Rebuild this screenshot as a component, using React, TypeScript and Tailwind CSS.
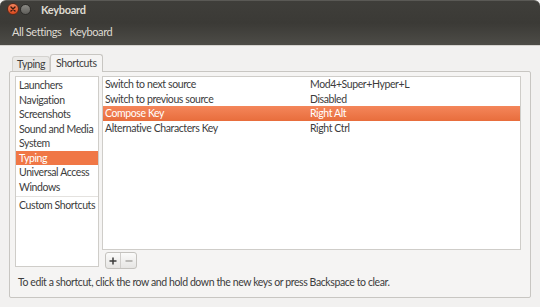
import React from 'react';

const font = { fontFamily: '"Lato", "Liberation Sans", sans-serif' };

const categories = [
  'Launchers',
  'Navigation',
  'Screenshots',
  'Sound and Media',
  'System',
  'Typing',
  'Universal Access',
  'Windows',
];

const shortcuts: { name: string; key: string }[] = [
  { name: 'Switch to next source', key: 'Mod4+Super+Hyper+L' },
  { name: 'Switch to previous source', key: 'Disabled' },
  { name: 'Compose Key', key: 'Right Alt' },
  { name: 'Alternative Characters Key', key: 'Right Ctrl' },
];

const WindowButtons = () => (
  <div className="flex items-center gap-[1px] pl-[7px]">
    <div className="w-[12px] h-[12px] rounded-full bg-gradient-to-b from-[#f4825a] to-[#d9491c] border border-[#5a2a1a] flex items-center justify-center">
      <svg width="6" height="6" viewBox="0 0 6 6">
        <path d="M1 1 L5 5 M5 1 L1 5" stroke="#3a1a10" strokeWidth="1.4" strokeLinecap="round" />
      </svg>
    </div>
    <div className="w-[11px] h-[11px] rounded-full bg-gradient-to-b from-[#8a8984] to-[#5f5e5a] border border-[#2e2d2a]" />
  </div>
);

export default function App() {
  return (
    <div className="w-[540px] h-[307px] bg-[#f2f1f0] flex flex-col overflow-hidden text-[#3c3c3c] text-[10.5px] tracking-[-0.4px] leading-none whitespace-nowrap" style={font}>
      {/* title + toolbar */}
      <div className="h-[45px] flex flex-col rounded-t-[6px] bg-gradient-to-b from-[#3f3e3a] via-[#3b3a36] to-[#4d4c47] border-t border-[#5a5955]">
        <div className="h-[16px] flex items-center">
          <WindowButtons />
          <span className="ml-[10px] font-bold text-[11px] tracking-[-0.3px] text-[#dfdbd2]">Keyboard</span>
        </div>
        <div className="flex-1 flex items-center pl-[12px] gap-[8px] text-[11px] text-[#dfdbd2]">
          <span>All Settings</span>
          <span>Keyboard</span>
        </div>
      </div>

      {/* content */}
      <div className="flex-1 flex flex-col px-[9px] pt-[7px] pb-[9px] border-t border-[#d6d4d0]">
        {/* tabs */}
        <div className="flex items-end h-[18px] pl-[3px] relative z-10">
          <div className="h-[15px] px-[4px] flex items-center border border-b-0 border-[#d4d2ce] rounded-t-[3px] bg-[#eae9e7]">
            Typing
          </div>
          <div className="h-[18px] px-[5px] flex items-center border border-b-0 border-[#c8c6c2] rounded-t-[3px] bg-[#f5f4f3] -mb-[1px]">
            Shortcuts
          </div>
        </div>

        <div className="flex-1 flex flex-col border border-[#c8c6c2] bg-[#f5f4f3] rounded-[2px] px-[5px] pt-[4px] pb-[4px]">
          <div className="flex-1 flex gap-[3px]">
            {/* category list */}
            <div className="w-[84px] bg-white border border-[#cfcdc9] flex flex-col pt-[1px] mb-[2px]">
              {categories.map((c) => (
                <div
                  key={c}
                  className={`h-[14.5px] flex items-center pl-[3px] ${c === 'Typing' ? 'bg-[#f07746] text-white' : ''}`}
                >
                  {c}
                </div>
              ))}
              <div className="border-t border-[#e4e2df] mt-[2px] mb-[1px]" />
              <div className="h-[14.5px] flex items-center pl-[3px]">Custom Shortcuts</div>
            </div>

            {/* shortcut list */}
            <div className="flex-1 flex flex-col">
              <div className="flex-1 bg-white border border-[#cfcdc9] flex flex-col mr-[4px]">
                {shortcuts.map((s) => (
                  <div
                    key={s.name}
                    className={`h-[14.5px] flex items-center pl-[2px] ${s.name === 'Compose Key' ? 'bg-gradient-to-b from-[#f4865a] to-[#e86d3c] text-white' : ''}`}
                  >
                    <span className="w-[205px]">{s.name}</span>
                    <span>{s.key}</span>
                  </div>
                ))}
              </div>
              <div className="h-[19px] flex items-center pl-[3px] pt-[2px]">
                <div className="flex border border-[#c4c2be] rounded-[3px] bg-gradient-to-b from-[#fbfbfa] to-[#e6e5e3]">
                  <div className="w-[15px] h-[15px] flex items-center justify-center border-r border-[#d0cecb]">
                    <svg width="8" height="8" viewBox="0 0 8 8">
                      <path d="M4 0.5 V7.5 M0.5 4 H7.5" stroke="#3c3c3c" strokeWidth="1.5" />
                    </svg>
                  </div>
                  <div className="w-[15px] h-[15px] flex items-center justify-center">
                    <svg width="8" height="8" viewBox="0 0 8 8">
                      <path d="M0.5 4 H7.5" stroke="#a9a7a3" strokeWidth="1.5" />
                    </svg>
                  </div>
                </div>
              </div>
            </div>
          </div>
          <div className="h-[24px] flex items-center pl-[3px] pt-[2px]">
            To edit a shortcut, click the row and hold down the new keys or press Backspace to clear.
          </div>
        </div>
      </div>
    </div>
  );
}
